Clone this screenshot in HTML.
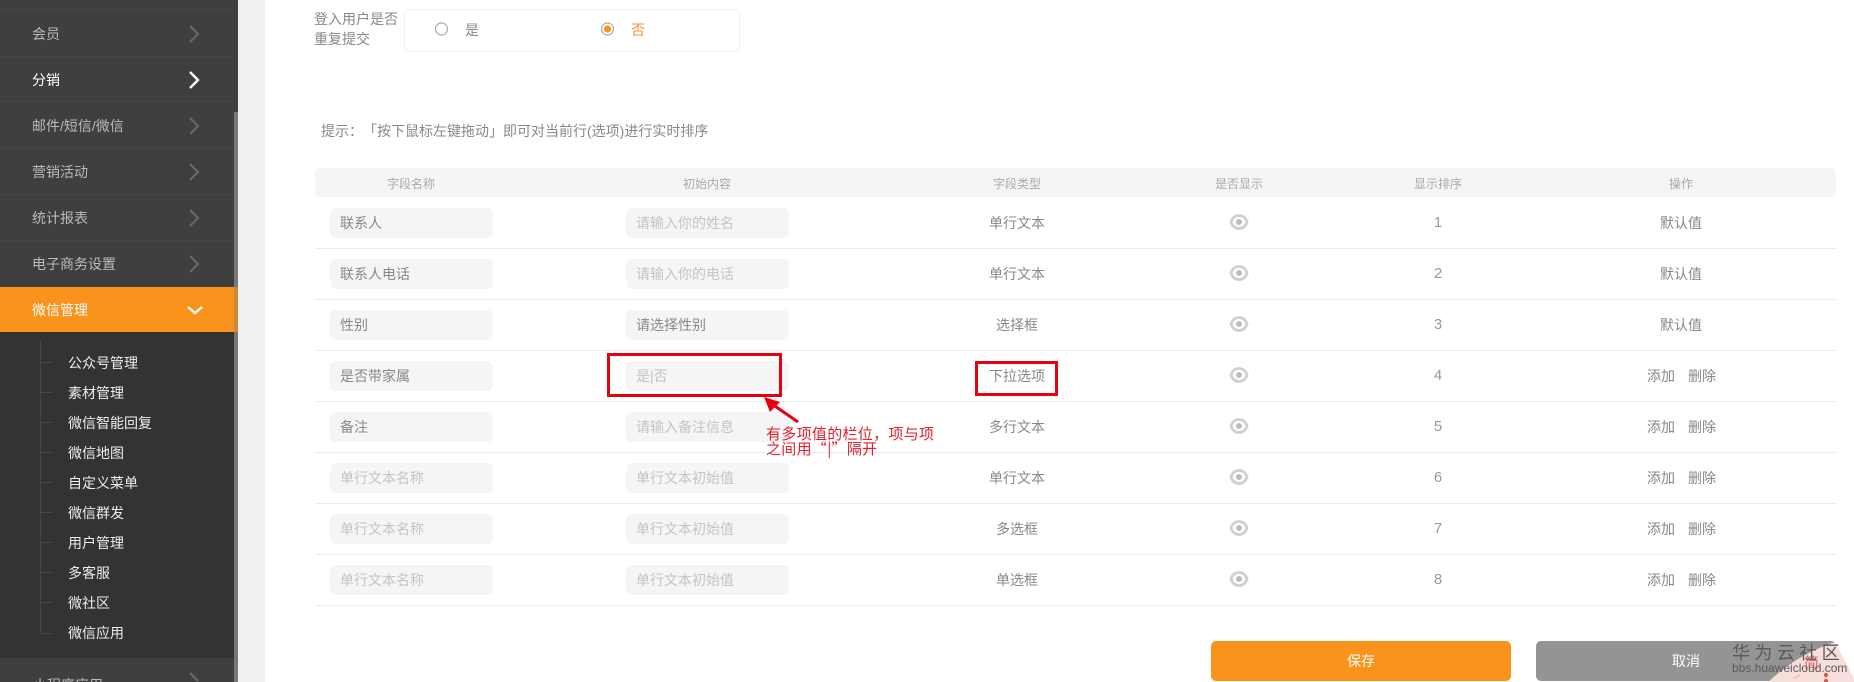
<!DOCTYPE html>
<html lang="zh-CN"><head><meta charset="utf-8"><title>表单设置</title>
<style>
html,body{margin:0;padding:0;width:1854px;height:682px;overflow:hidden;background:#fff}
body{position:relative;font:14px/20px "Liberation Sans","Noto Sans CJK SC",sans-serif;color:#888;text-spacing-trim:space-all}
div,span,svg{position:absolute;white-space:nowrap}
.side{left:0;top:0;width:238px;height:682px;background:#3f3f3f}
.gut{left:238px;top:0;width:27px;height:682px;background:#f1f1f1}
.sep{left:0;width:234px;height:1px;background:#454545}
.m{left:32px;color:#bbb;height:20px}
.sub{left:68px;color:#eee;height:20px}
.tick{left:40px;width:12px;height:1px;background:#474747}
.hd{font-size:12px;color:#aaa;top:174px;height:20px;transform:translateX(-50%)}
.line{left:315px;width:1521px;height:1px;background:#ececec}
.in{width:163px;height:30px;background:#f5f5f5;border-radius:6px}
.t{height:20px;color:#888}
.p{color:#c4c4c4}
.c{transform:translateX(-50%);color:#888;height:20px}
.n{font-size:15px;color:#999}
.note{font-family:"Noto Sans CJK SC",sans-serif;font-size:15px;line-height:15px;letter-spacing:.3px;color:#e2202c}
</style></head><body>
<div class="side"></div>
<div class="gut"></div>
<div class="sep" style="top:9px"></div><div class="sep" style="top:56px"></div><div class="sep" style="top:101px"></div><div class="sep" style="top:148px"></div><div class="sep" style="top:194px"></div><div class="sep" style="top:240px"></div>
<div class="m" style="top:24px">会员</div>
<div class="m" style="top:70px;color:#fff">分销</div>
<div class="m" style="top:116px">邮件/短信/微信</div>
<div class="m" style="top:162px">营销活动</div>
<div class="m" style="top:208px">统计报表</div>
<div class="m" style="top:254px">电子商务设置</div>
<svg style="left:188px;top:0;width:14px;height:290px" viewBox="0 0 14 290" fill="none" stroke="#6a6a6a" stroke-width="2"><path d="M2 26l8 8-8 8M2 118l8 8-8 8M2 164l8 8-8 8M2 210l8 8-8 8M2 256l8 8-8 8"/><path d="M2 72l8 8-8 8" stroke="#fff" stroke-width="2.4"/></svg>
<div style="left:0;top:287px;width:238px;height:45px;background:#fa931c"></div>
<div class="m" style="top:300px;color:#fff">微信管理</div>
<svg style="left:186px;top:303px;width:18px;height:14px" viewBox="0 0 18 14" fill="none" stroke="#fff" stroke-width="2.4"><path d="M2 4l7 6 7-6"/></svg>
<div style="left:0;top:332px;width:234px;height:326px;background:#333"></div>
<div style="left:40px;top:340px;width:1px;height:294px;background:#474747"></div>
<div class="tick" style="top:362px"></div><div class="tick" style="top:392px"></div><div class="tick" style="top:422px"></div><div class="tick" style="top:452px"></div><div class="tick" style="top:482px"></div><div class="tick" style="top:512px"></div><div class="tick" style="top:542px"></div><div class="tick" style="top:572px"></div><div class="tick" style="top:602px"></div><div class="tick" style="top:633px"></div>
<div class="sub" style="top:353px">公众号管理</div>
<div class="sub" style="top:383px">素材管理</div>
<div class="sub" style="top:413px">微信智能回复</div>
<div class="sub" style="top:443px">微信地图</div>
<div class="sub" style="top:473px">自定义菜单</div>
<div class="sub" style="top:503px">微信群发</div>
<div class="sub" style="top:533px">用户管理</div>
<div class="sub" style="top:563px">多客服</div>
<div class="sub" style="top:593px">微社区</div>
<div class="sub" style="top:623px">微信应用</div>
<div class="m" style="top:675px;left:33px;height:7px;overflow:hidden">小程序应用</div>
<svg style="left:188px;top:668px;width:14px;height:14px" viewBox="0 0 14 14" fill="none" stroke="#6a6a6a" stroke-width="2"><path d="M2 5l8 8"/></svg>
<div style="left:234px;top:112px;width:4px;height:570px;background:#777"></div>
<div style="left:234px;top:287px;width:4px;height:45px;background:#c98a3c"></div>

<div class="t" style="left:314px;top:9px">登入用户是否</div>
<div class="t" style="left:314px;top:29px">重复提交</div>
<div style="left:404px;top:9px;width:334px;height:41px;border:1px solid #f0f0f0;border-radius:5px"></div>
<svg style="left:434px;top:22px;width:14px;height:14px" viewBox="0 0 14 14"><circle cx="7.5" cy="7" r="6" fill="none" stroke="#aaa" stroke-width="1.2"/></svg>
<div class="t" style="left:465px;top:20px">是</div>
<svg style="left:600px;top:22px;width:14px;height:14px" viewBox="0 0 14 14"><circle cx="7.5" cy="7" r="6" fill="none" stroke="#aaa" stroke-width="1.2"/><circle cx="7.5" cy="7" r="3.6" fill="#fa931c"/></svg>
<div class="t" style="left:631px;top:20px;color:#f0923a">否</div>
<div class="t" style="left:321px;top:121px;color:#888">提示：「按下鼠标左键拖动」即可对当前行(选项)进行实时排序</div>

<div style="left:315px;top:168px;width:1521px;height:29px;background:#f5f5f5;border-radius:5px"></div>
<div class="hd" style="left:411px">字段名称</div><div class="hd" style="left:707px">初始内容</div><div class="hd" style="left:1017px">字段类型</div><div class="hd" style="left:1239px">是否显示</div><div class="hd" style="left:1438px">显示排序</div><div class="hd" style="left:1681px">操作</div>

<div class="line" style="top:248px"></div><div class="line" style="top:299px"></div><div class="line" style="top:350px"></div><div class="line" style="top:401px"></div><div class="line" style="top:452px"></div><div class="line" style="top:503px"></div><div class="line" style="top:554px"></div><div class="line" style="top:605px"></div>

<div class="in" style="left:330px;top:208px"></div><div class="in" style="left:330px;top:259px"></div><div class="in" style="left:330px;top:310px"></div><div class="in" style="left:330px;top:361px"></div><div class="in" style="left:330px;top:412px"></div><div class="in" style="left:330px;top:463px"></div><div class="in" style="left:330px;top:514px"></div><div class="in" style="left:330px;top:565px"></div>
<div class="in" style="left:626px;top:208px"></div><div class="in" style="left:626px;top:259px"></div><div class="in" style="left:626px;top:310px"></div><div class="in" style="left:626px;top:361px"></div><div class="in" style="left:626px;top:412px"></div><div class="in" style="left:626px;top:463px"></div><div class="in" style="left:626px;top:514px"></div><div class="in" style="left:626px;top:565px"></div>

<div class="t" style="left:340px;top:213px">联系人</div>
<div class="t" style="left:340px;top:264px">联系人电话</div>
<div class="t" style="left:340px;top:315px">性别</div>
<div class="t" style="left:340px;top:366px">是否带家属</div>
<div class="t" style="left:340px;top:417px">备注</div>
<div class="t p" style="left:340px;top:468px">单行文本名称</div>
<div class="t p" style="left:340px;top:519px">单行文本名称</div>
<div class="t p" style="left:340px;top:570px">单行文本名称</div>

<div class="t p" style="left:636px;top:213px">请输入你的姓名</div>
<div class="t p" style="left:636px;top:264px">请输入你的电话</div>
<div class="t" style="left:636px;top:315px">请选择性别</div>
<div class="t p" style="left:636px;top:366px">是|否</div>
<div class="t p" style="left:636px;top:417px">请输入备注信息</div>
<div class="t p" style="left:636px;top:468px">单行文本初始值</div>
<div class="t p" style="left:636px;top:519px">单行文本初始值</div>
<div class="t p" style="left:636px;top:570px">单行文本初始值</div>

<div class="c" style="left:1017px;top:213px">单行文本</div>
<div class="c" style="left:1017px;top:264px">单行文本</div>
<div class="c" style="left:1017px;top:315px">选择框</div>
<div class="c" style="left:1017px;top:366px">下拉选项</div>
<div class="c" style="left:1017px;top:417px">多行文本</div>
<div class="c" style="left:1017px;top:468px">单行文本</div>
<div class="c" style="left:1017px;top:519px">多选框</div>
<div class="c" style="left:1017px;top:570px">单选框</div>

<svg style="left:1229px;top:213px;width:20px;height:378px" viewBox="0 0 20 378"><defs><g id="eye"><path d="M2 9C3.5 4.5 6.5 2.5 10 2.5S16.500 4.500 18 9C16.500 13.500 13.500 15.500 10 15.500S3.500 13.500 2 9Z" fill="none" stroke="#d0d0d0" stroke-width="2.8"/><circle cx="10" cy="9" r="3" fill="#bdbdbd"/></g></defs><use href="#eye"/><use href="#eye" y="51"/><use href="#eye" y="102"/><use href="#eye" y="153"/><use href="#eye" y="204"/><use href="#eye" y="255"/><use href="#eye" y="306"/><use href="#eye" y="357"/></svg>

<div class="c n" style="left:1438px;top:213px">1</div>
<div class="c n" style="left:1438px;top:264px">2</div>
<div class="c n" style="left:1438px;top:315px">3</div>
<div class="c n" style="left:1438px;top:366px">4</div>
<div class="c n" style="left:1438px;top:417px">5</div>
<div class="c n" style="left:1438px;top:468px">6</div>
<div class="c n" style="left:1438px;top:519px">7</div>
<div class="c n" style="left:1438px;top:570px">8</div>

<div class="c" style="left:1681px;top:213px">默认值</div>
<div class="c" style="left:1681px;top:264px">默认值</div>
<div class="c" style="left:1681px;top:315px">默认值</div>
<div class="t" style="left:1647px;top:366px">添加</div><div class="t" style="left:1688px;top:366px">删除</div>
<div class="t" style="left:1647px;top:417px">添加</div><div class="t" style="left:1688px;top:417px">删除</div>
<div class="t" style="left:1647px;top:468px">添加</div><div class="t" style="left:1688px;top:468px">删除</div>
<div class="t" style="left:1647px;top:519px">添加</div><div class="t" style="left:1688px;top:519px">删除</div>
<div class="t" style="left:1647px;top:570px">添加</div><div class="t" style="left:1688px;top:570px">删除</div>

<div style="left:607px;top:353px;width:169px;height:38px;border:3px solid #e60012"></div>
<div style="left:975px;top:361px;width:77px;height:29px;border:3px solid #e60012"></div>
<svg style="left:755px;top:390px;width:50px;height:40px" viewBox="0 0 50 40"><path d="M43 32L17 14" stroke="#e60012" stroke-width="3" fill="none"/><path d="M9 7L25 12L15 22Z" fill="#e60012"/></svg>
<div class="note" style="left:766px;top:426px">有多项值的栏位，项与项</div>
<div class="note" style="left:766px;top:441px">之间用“|”隔开</div>

<div style="left:1211px;top:641px;width:300px;height:40px;background:#fa931c;border-radius:5px"></div>
<div class="c" style="left:1361px;top:651px;color:#fff">保存</div>
<div style="left:1536px;top:641px;width:300px;height:40px;background:#949494;border-radius:5px"></div>
<div class="c" style="left:1686px;top:651px;color:#fff">取消</div>

<svg style="left:1760px;top:640px;width:94px;height:42px" viewBox="0 0 94 42"><path d="M8 42Q38 14 75 2L96 42Z" fill="#f6dfda"/><circle cx="66" cy="35" r="2" fill="#d9534f"/><circle cx="66" cy="41" r="2" fill="#d9534f"/><path d="M34 38l6-3" stroke="#eeb8b0" stroke-width="1.500"/></svg>
<div style="left:1732px;top:642px;font-size:18px;line-height:22px;letter-spacing:4.4px;color:#5a5a5a">华为云社区</div>
<div style="left:1732px;top:660px;font-size:12px;line-height:16px;color:#5a5a5a">bbs.huaweicloud.com</div>
<div style="left:1804px;top:655px;font-size:15px;line-height:18px;color:#c94a4a;opacity:.8">简</div>
</body></html>
